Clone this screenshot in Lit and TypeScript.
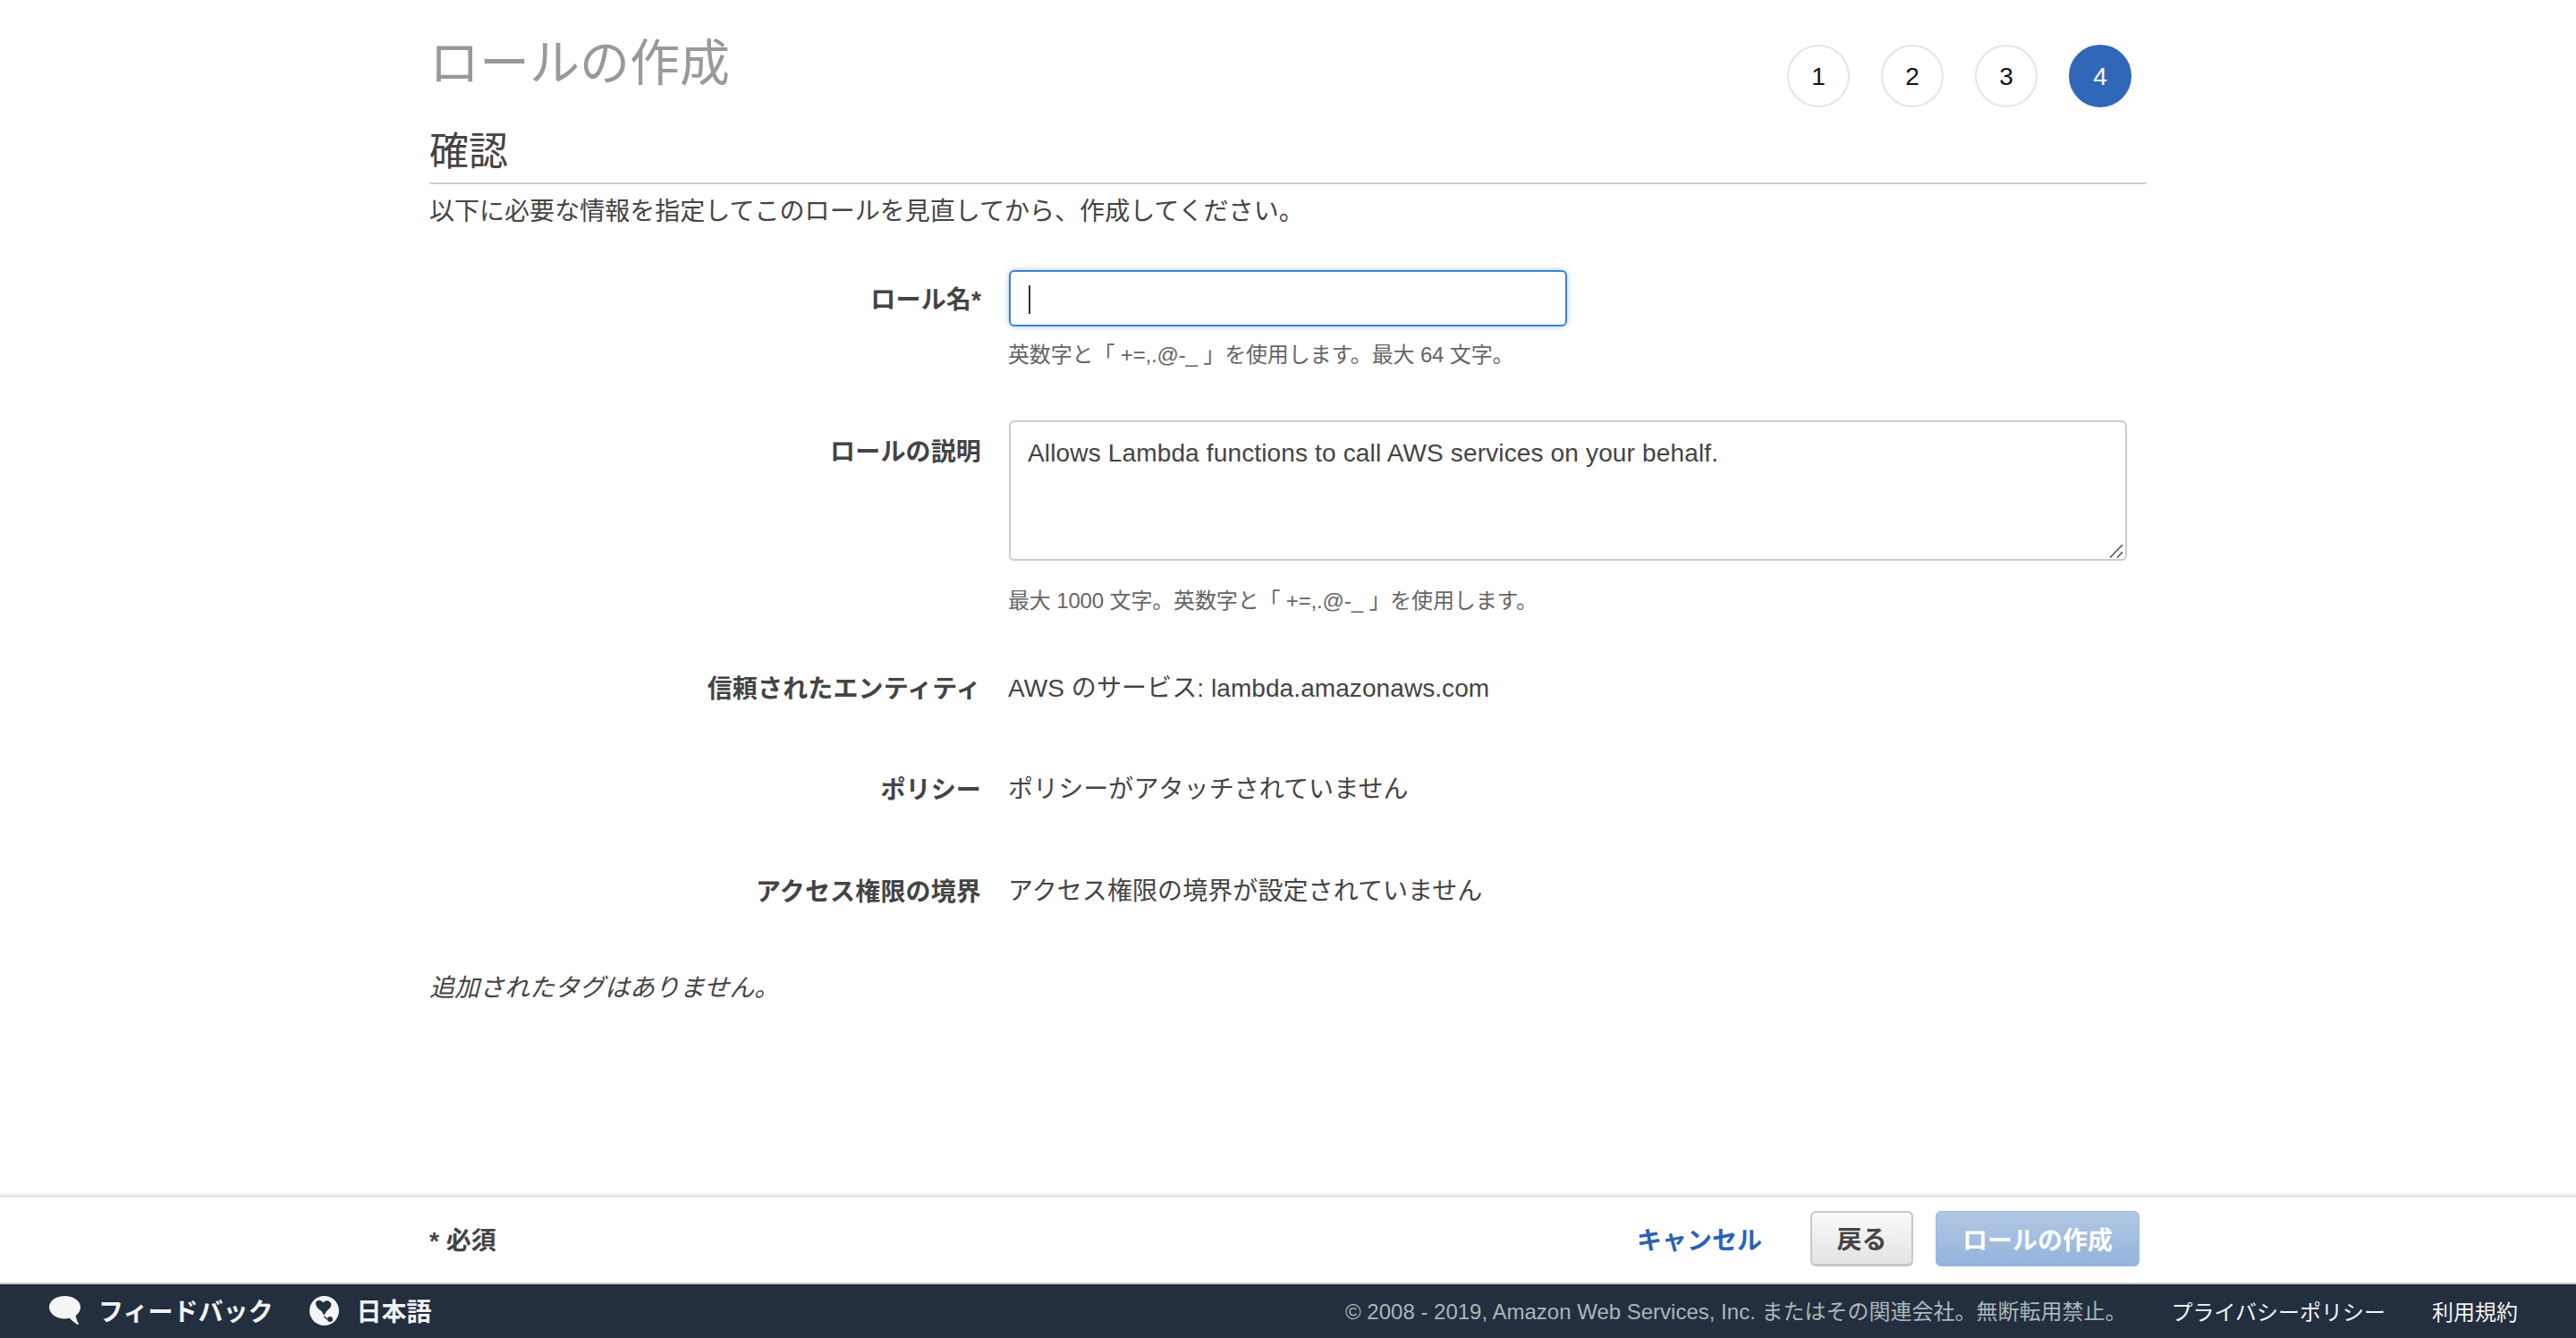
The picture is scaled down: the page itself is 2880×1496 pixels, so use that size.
import { LitElement, html, css } from "lit";
import { customElement } from "lit/decorators.js";

const SANS = css`"Liberation Sans", "Noto Sans CJK JP", sans-serif`;

@customElement("app-root")
class AppRoot extends LitElement {
  static styles = css`
    :host { display: flex; flex-direction: column; height: 100vh; min-height: 1496px; font-family: ${SANS}; color: #444; font-size: 28px; background: #fff; box-sizing: border-box; }
    * { box-sizing: border-box; }
    .main { flex: 1; padding-left: 480px; }
    .content { width: 1920px; }
    .head { display: flex; justify-content: space-between; align-items: flex-start; height: 142px; }
    h1 { margin: 36px 0 0; font-size: 56px; line-height: 70px; font-weight: 400; color: #999; }
    .steps { display: flex; gap: 35px; margin: 50px 17px 0 0; }
    .step { width: 70px; height: 70px; border-radius: 50%; border: 2px solid #e5e5e5; display: flex; align-items: center; justify-content: center; color: #111; font-size: 28px; padding-top: 1px; }
    .step.on { background: #3067b8; border-color: #3067b8; color: #fff; }
    h2 { margin: 0; font-size: 44px; line-height: 55px; font-weight: 400; color: #444; border-bottom: 2px solid #ccc; height: 64px; }
    .intro { margin: 0; padding-top: 15px; line-height: 32px; height: 96px; letter-spacing: 0.03px; }
    .row { display: grid; grid-template-columns: 617px 1fr; column-gap: 31px; align-items: start; }
    .label { text-align: right; font-weight: 700; line-height: 36px; letter-spacing: 0.15px; }
    .value { line-height: 36px; margin-left: -1px; letter-spacing: 0.08px; }
    .r1 { height: 168px; } .r1 .label { padding-top: 16px; }
    .r2 { height: 282px; } .r2 .label { padding-top: 18px; }
    .r3 { height: 113px; } .r4 { height: 114px; } .r5 { height: 108px; }
    .r3 .label, .r4 .label, .r5 .label { padding-top: 1px; }
    .field { width: 624px; height: 63px; border: 2px solid #3f80d8; border-radius: 6px; box-shadow: 0 0 6px rgba(63, 128, 216, .45); position: relative; background: #fff; }
    .caret { position: absolute; left: 20px; top: 15px; width: 2px; height: 32px; background: #333; }
    .area { position: relative; width: 1250px; height: 157px; }
    textarea { display: block; width: 100%; height: 100%; border: 2px solid #ccc; border-radius: 6px; padding: 17px 19px; margin: 0; font: inherit; font-size: 28px; line-height: 36px; letter-spacing: 0.15px; color: #444; resize: none; outline: none; background: #fff; }
    .grip { position: absolute; right: 4px; bottom: 3px; display: block; }
    .help { margin: 0 0 0 -1px; font-size: 24px; line-height: 30px; color: #666; letter-spacing: -0.15px; }
    .r1 .help { margin-top: 17px; }
    .r2 .help { margin-top: 30px; }
    .tags { margin: 0; font-style: italic; line-height: 36px; }
    .bar { height: 99px; border-top: 1px solid #d0d0d0; border-bottom: 2px solid #ccc; box-shadow: 0 -2px 3px rgba(0, 0, 0, .08); display: flex; align-items: center; padding: 0 488px 3px 480px; justify-content: space-between; }
    .req { font-weight: 700; font-size: 28px; }
    .actions { display: flex; align-items: center; }
    .cancel { color: #2b62b5; font-weight: 700; text-decoration: none; margin-right: 54px; }
    .btn { height: 62px; border-radius: 6px; display: flex; align-items: center; justify-content: center; font-weight: 700; font-size: 28px; }
    .back { width: 115px; border: 2px solid #c8c8c8; border-bottom-width: 3px; background: linear-gradient(#fafafa, #e3e3e3); color: #444; margin-right: 25px; }
    .create { width: 228px; background: linear-gradient(#b2c8e4, #92b3da); border: 1px solid #9dbade; color: #fff; }
    .foot { height: 60px; background: #232e3f; display: flex; align-items: center; padding: 0 65px 2px 55px; font-size: 24px; color: #f2f3f3; }
    .fi { display: flex; align-items: center; font-weight: 700; font-size: 28px; }
    .fi svg { display: block; }
    .fb { margin-right: 41px; gap: 20px; }
    .lang { gap: 19px; }
    .copy { margin-left: auto; color: #aab7b8; margin-right: 50px; margin-bottom: 1px; }
    .pp { margin-right: 52px; }
  `;

  render() {
    return html`
      <div class="main"><div class="content">
        <div class="head">
          <h1>ロールの作成</h1>
          <div class="steps">
            ${[1, 2, 3, 4].map((n) => html`<div class="step ${n === 4 ? "on" : ""}">${n}</div>`)}
          </div>
        </div>
        <h2>確認</h2>
        <p class="intro">以下に必要な情報を指定してこのロールを見直してから、作成してください。</p>
        <div class="row r1">
          <div class="label">ロール名*</div>
          <div>
            <div class="field"><div class="caret"></div></div>
            <p class="help">英数字と「 +=,.@-_ 」を使用します。最大 64 文字。</p>
          </div>
        </div>
        <div class="row r2">
          <div class="label">ロールの説明</div>
          <div>
            <div class="area">
              <textarea .value=${"Allows Lambda functions to call AWS services on your behalf."}></textarea>
              <svg class="grip" width="16" height="16" viewBox="0 0 16 16"><path d="M1 15.500 15 1M9 15.500 15 9" stroke="#555" stroke-width="1.600" fill="none"/></svg>
            </div>
            <p class="help">最大 1000 文字。英数字と「 +=,.@-_ 」を使用します。</p>
          </div>
        </div>
        <div class="row r3"><div class="label">信頼されたエンティティ</div><div class="value">AWS のサービス: lambda.amazonaws.com</div></div>
        <div class="row r4"><div class="label">ポリシー</div><div class="value">ポリシーがアタッチされていません</div></div>
        <div class="row r5"><div class="label">アクセス権限の境界</div><div class="value">アクセス権限の境界が設定されていません</div></div>
        <p class="tags">追加されたタグはありません。</p>
      </div></div>
      <div class="bar">
        <div class="req">* 必須</div>
        <div class="actions">
          <a class="cancel">キャンセル</a>
          <div class="btn back">戻る</div>
          <div class="btn create">ロールの作成</div>
        </div>
      </div>
      <div class="foot">
        <div class="fi fb">
          <svg width="35" height="33" viewBox="0 0 35 33"><path fill="#f5f5f5" d="M17.500 0C27 0 35 5.500 35 12.500c0 3.800-2 7-5.300 9.300.3 3 1.500 6 3.100 9.200.3.800-.3 1.300-1.100 1-3.900-2-6.600-4.500-8.700-7.200-1.800.4-3.600.7-5.500.7C7.800 25.500 0 19.800 0 12.500S7.800 0 17.500 0z"/></svg>
          <span>フィードバック</span>
        </div>
        <div class="fi lang">
          <svg width="33" height="33" viewBox="0 0 33 33"><circle cx="16.500" cy="16.500" r="16.500" fill="#f5f5f5"/><path fill="#232e3f" d="M7 8c0-2.500 2.500-3.500 5-3 1.500.3 2.500 1.500 3.500 2.500 1-1.500 3-2.500 5-2 3 .7 4.500 3.500 3.500 6-1 2.500-4 4-5.500 6.500-1 1.500-1.500 3.500-2.500 3-1-.4-1.200-2.500-2.500-4C11 15.500 7 12 7 8z"/><circle cx="23" cy="26" r="3" fill="#232e3f"/><path fill="none" stroke="#232e3f" stroke-width="1.200" d="M16.500 22.500c.5 2 2.500 3 4 3.500"/></svg>
          <span>日本語</span>
        </div>
        <span class="copy">© 2008 - 2019, Amazon Web Services, Inc. またはその関連会社。無断転用禁止。</span>
        <span class="pp">プライバシーポリシー</span>
        <span>利用規約</span>
      </div>
    `;
  }
}
